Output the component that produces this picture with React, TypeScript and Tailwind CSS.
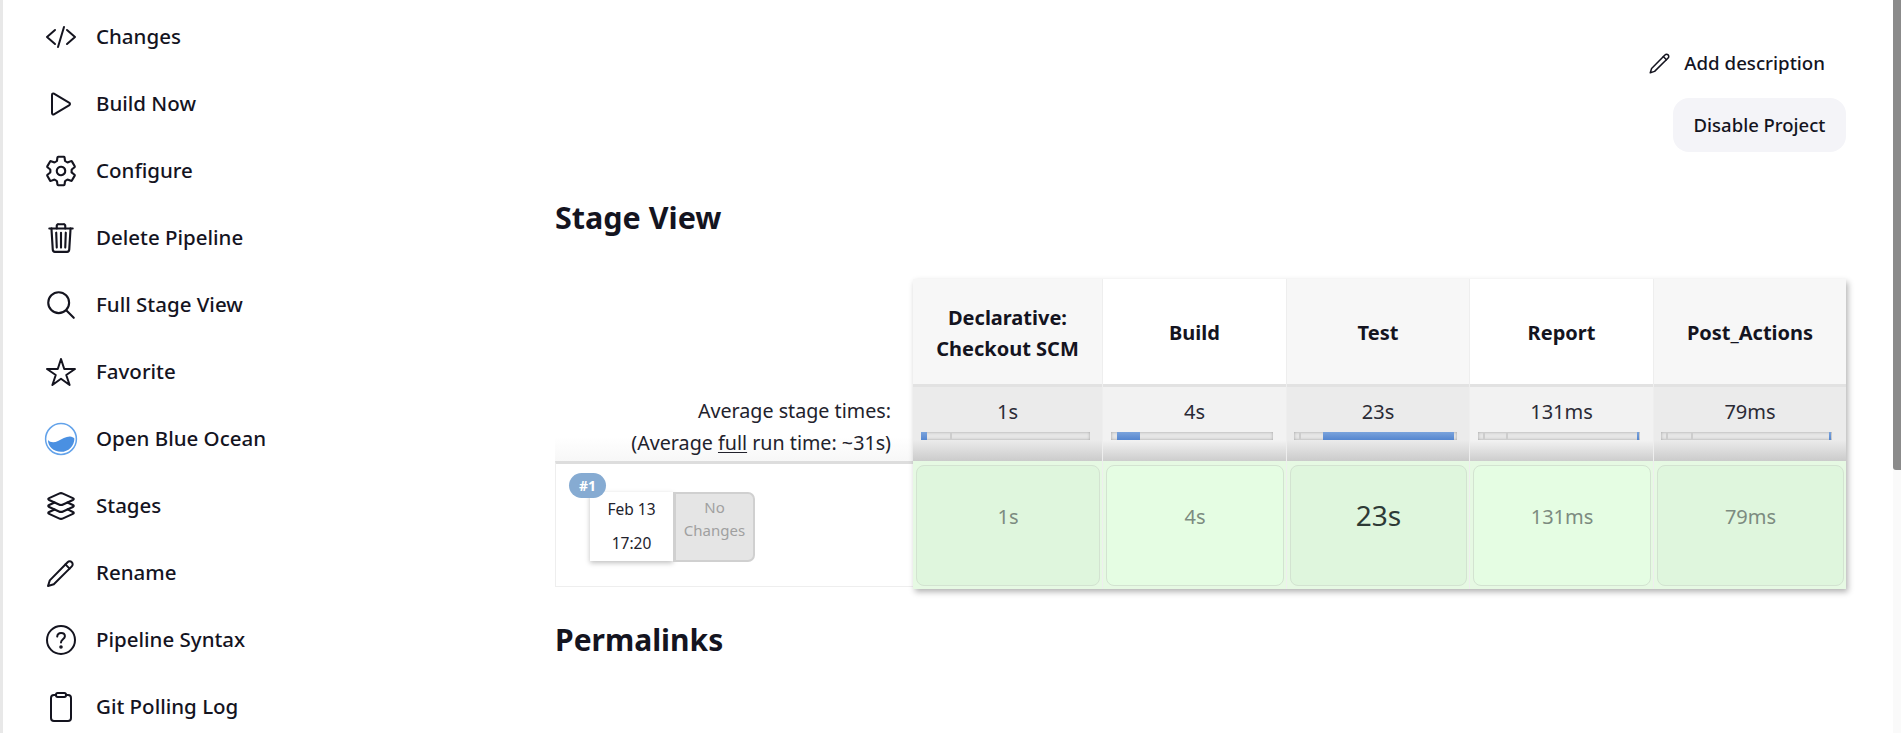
import type { ReactNode } from "react";
import {
  IoClipboardOutline,
  IoCodeSlashOutline,
  IoLayersOutline,
  IoPlayOutline,
  IoSearchOutline,
  IoSettingsOutline,
  IoStarOutline,
  IoTrashOutline,
} from "react-icons/io5";

function BlueOceanIcon() {
  return (
    <svg viewBox="0 0 34 34" className="size-[34px] shrink-0">
      <circle cx="17" cy="17" r="15.4" fill="#fff" stroke="#62a2ea" strokeWidth="1.5" />
      <path
        d="M4 18c2 2.500 6 3 10 1s8-4.500 12-4.400c2 .2 3.500.9 4.400 1.800C30.400 24 24.500 29.800 17 29.800S3.800 24.500 4 18z"
        fill="#4a90e2"
      />
    </svg>
  );
}

function PencilIcon({ className }: { className: string }) {
  return (
    <svg
      viewBox="0 0 32 32"
      fill="none"
      stroke="currentColor"
      strokeWidth="2"
      strokeLinejoin="round"
      strokeLinecap="round"
      className={className}
    >
      <path d="M3 29l1.800-5.600L22.600 5.200a2.900 2.900 0 0 1 4.200 4.200L8.800 27.200z" />
      <path d="M20.400 7.400l4.200 4.200" />
    </svg>
  );
}

function HelpIcon() {
  return (
    <svg
      viewBox="0 0 32 32"
      fill="none"
      stroke="currentColor"
      strokeWidth="2"
      strokeLinecap="round"
      className="size-8 shrink-0"
    >
      <circle cx="16" cy="16" r="14" />
      <path d="M12.200 12.600c.2-2.300 1.800-3.600 3.900-3.600 2.200 0 3.800 1.400 3.800 3.300 0 2.900-3.900 3.200-3.900 6.200" />
      <circle cx="16" cy="23" r=".8" fill="currentColor" />
    </svg>
  );
}

const navItems: { label: string; icon: ReactNode }[] = [
  { label: "Changes", icon: <IoCodeSlashOutline className="size-8 shrink-0" /> },
  { label: "Build Now", icon: <IoPlayOutline className="size-8 shrink-0" /> },
  { label: "Configure", icon: <IoSettingsOutline className="size-[34px] shrink-0" /> },
  { label: "Delete Pipeline", icon: <IoTrashOutline className="size-[34px] shrink-0" /> },
  { label: "Full Stage View", icon: <IoSearchOutline className="size-[34px] shrink-0" /> },
  { label: "Favorite", icon: <IoStarOutline className="size-8 shrink-0" /> },
  { label: "Open Blue Ocean", icon: <BlueOceanIcon /> },
  { label: "Stages", icon: <IoLayersOutline className="size-[34px] shrink-0" /> },
  { label: "Rename", icon: <PencilIcon className="size-8 shrink-0" /> },
  { label: "Pipeline Syntax", icon: <HelpIcon /> },
  { label: "Git Polling Log", icon: <IoClipboardOutline className="size-8 shrink-0" /> },
];

interface Stage {
  name: ReactNode;
  time: string;
  width: number;
  barLeft: number;
  barRight: number;
  fill: [number, number];
  ticks: number[];
  odd: boolean;
  large?: boolean;
}

const stages: Stage[] = [
  { name: <>Declarative:<br />Checkout SCM</>, time: "1s", width: 190, barLeft: 8, barRight: 177, fill: [0, 6], ticks: [29], odd: true },
  { name: "Build", time: "4s", width: 184, barLeft: 8, barRight: 170, fill: [6, 23], ticks: [], odd: false },
  { name: "Test", time: "23s", width: 183, barLeft: 7, barRight: 170, fill: [29, 131], ticks: [5], odd: true, large: true },
  { name: "Report", time: "131ms", width: 184, barLeft: 8, barRight: 170, fill: [159, 2], ticks: [5, 28], odd: false },
  { name: "Post_Actions", time: "79ms", width: 192, barLeft: 7, barRight: 178, fill: [168, 2], ticks: [5, 30], odd: true },
];

function StageBar({ stage }: { stage: Stage }) {
  const barWidth = stage.barRight - stage.barLeft;
  return (
    <div
      className="relative mt-[8px] h-2 bg-[#e6e6e6] shadow-[inset_0_0_3px_#a0a0a0]"
      style={{ width: barWidth, marginLeft: stage.barLeft }}
    >
      {stage.ticks.map((tick) => (
        <div
          key={tick}
          className="absolute top-0 h-2 w-[2px] bg-[#cdcdcd]"
          style={{ left: tick }}
        />
      ))}
      <div
        className="absolute top-0 h-2 bg-gradient-to-b from-[#7aa3dc] to-[#5586cf]"
        style={{ left: stage.fill[0], width: stage.fill[1] }}
      />
    </div>
  );
}

function StageTable() {
  return (
    <div className="flex h-[310px] w-[933px] shrink-0 bg-white shadow-[2px_3px_6px_rgba(0,0,0,0.3)]">
      {stages.map((stage, i) => (
        <div
          key={i}
          className="flex shrink-0 flex-col border-r border-[#eeeeee] last:border-r-0"
          style={{ width: stage.width }}
        >
          <div
            className={`flex h-[105px] items-center justify-center pt-[2px] text-center text-[20px] leading-[31px] font-bold text-[#14141f] ${
              stage.odd ? "bg-[#f7f7f7]" : "bg-white"
            }`}
          >
            <span>{stage.name}</span>
          </div>
          <div
            className={`h-[77px] border-t-[3px] border-[#e2e2e2] ${
              stage.odd
                ? "bg-[linear-gradient(#ebebeb_0,#ebebeb_72%,#cbcbcb_100%)]"
                : "bg-[linear-gradient(#f2f2f2_0,#f2f2f2_72%,#cdcdcd_100%)]"
            }`}
          >
            <div className="pt-[12px] text-center text-[20px] leading-[25px] text-[#2a2a35]">
              {stage.time}
            </div>
            <StageBar stage={stage} />
          </div>
          <div className="h-[128px] bg-[#e6f9e3] pt-[4px] pl-[3px] pr-[2px] pb-[3px]">
            <div
              className={`flex h-[121px] justify-center rounded-[8px] border border-[#d3e3d1] pt-[29px] ${
                stage.odd ? "bg-[#dff6dd]" : "bg-[#e5fde3]"
              } ${
                stage.large
                  ? "text-[28px] leading-[40px] text-[#2e3a36]"
                  : "text-[20px] leading-[44px] text-[#7c8b80]"
              }`}
            >
              {stage.time}
            </div>
          </div>
        </div>
      ))}
    </div>
  );
}

function RunLabels() {
  return (
    <div className="w-[358px] shrink-0">
      <div className="h-[103px]" />
      <div className="flex h-[79px] flex-col items-end bg-[linear-gradient(#ffffff_0,#ffffff_70%,#f7f7f7_100%)] pr-[22px] pt-[13px] text-[19.7px] leading-[32px] text-[#22222c]">
        <span>Average stage times:</span>
        <span>
          (Average <span className="underline underline-offset-2">full</span> run time: ~31s)
        </span>
      </div>
      <div className="h-[126px] border-t-[3px] border-b border-l border-t-[#dddddd] border-b-[#eeeeee] border-l-[#eeeeee] pl-[13px] pt-[9px]">
        <div className="flex">
          <div className="z-10 h-[25px] w-[37px] rounded-full bg-[#86abd2] text-center text-[14px] leading-[25px] font-bold text-white">
            #1
          </div>
          <div className="mt-[19px] -ml-[16px] flex">
            <div className="h-[69px] w-[83px] bg-white text-center text-[15.5px] leading-[34px] text-[#22222c] shadow-[0_2px_5px_rgba(0,0,0,0.25)]">
              <div>Feb 13</div>
              <div>17:20</div>
            </div>
            <div className="h-[70px] w-[82px] rounded-r-[7px] border-2 border-l-[3px] border-[#d0d0d0] bg-[#e5e5e5] pt-[2px] text-center text-[15px] leading-[23px] text-[#a0a0a0]">
              No
              <br />
              Changes
            </div>
          </div>
        </div>
      </div>
    </div>
  );
}

export default function App() {
  return (
    <div className="flex h-[733px] overflow-hidden bg-white font-['Noto_Sans','Open_Sans',sans-serif] text-[#14141f]">
      <aside className="w-[555px] shrink-0 border-l-[3px] border-[#e8e8e8] pl-[42px] pt-[3px]">
        {navItems.map((item) => (
          <div key={item.label} className="flex h-[67px] items-center">
            <span className="flex w-8 justify-center">{item.icon}</span>
            <span className="ml-[19px] text-[20.5px] font-medium">{item.label}</span>
          </div>
        ))}
      </aside>

      <main className="flex-1 pr-[47px]">
        <div className="flex flex-col items-end pt-[46px]">
          <div className="flex h-[34px] items-center gap-[12px] pr-[21px] text-[18.7px] font-medium">
            <PencilIcon className="size-[24px]" />
            <span>Add description</span>
          </div>
          <button
            type="button"
            className="mt-[18px] h-[54px] w-[173px] rounded-[16px] bg-[#f4f4f8] text-[18.5px] font-medium"
          >
            Disable Project
          </button>
        </div>
        <h2 className="mt-[44px] text-[30.5px] leading-[42px] font-bold">Stage View</h2>
        <div className="mt-[41px] flex">
          <RunLabels />
          <StageTable />
        </div>
        <h2 className="mt-[30px] text-[30px] leading-[42px] font-bold">Permalinks</h2>
      </main>

      <div className="w-2 shrink-0 bg-[#fafafa]">
        <div className="h-[470px] rounded-bl-[3px] bg-[#8b8b8b]" />
      </div>
    </div>
  );
}
